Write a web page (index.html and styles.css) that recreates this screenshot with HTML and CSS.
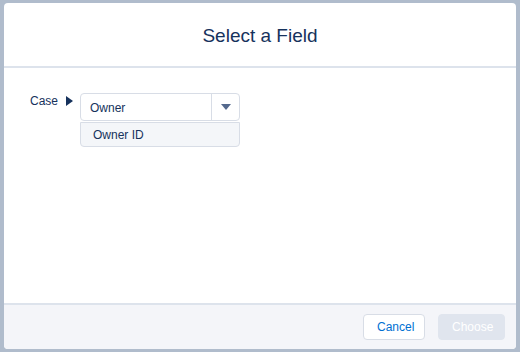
FILE: index.html
```html
<!DOCTYPE html>
<html lang="en">
<head>
  <meta charset="UTF-8">
  <title>Select a Field</title>
  <link rel="stylesheet" href="styles.css">
</head>
<body>
  <div class="modal">
    <header class="modal-header">
      <h2>Select a Field</h2>
    </header>

    <!-- Selector de campo -->
    <div class="modal-body">
      <div class="field-row">
        <span class="field-label">Case</span>
        <span class="arrow"></span>
        <div class="picker">
          <div class="select">
            <span class="select-value">Owner</span>
            <span class="select-btn"><span class="caret"></span></span>
          </div>
          <div class="option">Owner ID</div>
        </div>
      </div>
    </div>

    <footer class="modal-footer">
      <button class="btn btn-neutral">Cancel</button>
      <button class="btn btn-disabled" disabled>Choose</button>
    </footer>
  </div>
</body>
</html>
```

FILE: styles.css
```css
/* Estilos globales */
body {
  margin: 0;
  padding: 3px 4px 3px 4px;
  background-color: #b0bccc;
  font-family: 'Liberation Sans', Arial, sans-serif;
  color: #16325c;
  height: 352px;
  box-sizing: border-box;
}

.modal {
  background-color: #fff;
  border-radius: 4px;
  height: 346px;
  display: flex;
  flex-direction: column;
  overflow: hidden;
}

.modal-header {
  height: 63px;
  border-bottom: 2px solid #dde3ec;
  display: flex;
  align-items: center;
  justify-content: center;
}

.modal-header h2 {
  margin: 0;
  font-size: 19px;
  font-weight: normal;
  color: #16325c;
  padding-top: 3px;
}

.modal-body {
  flex: 1;
  padding: 25px 0 0 26px;
}

.field-row {
  display: flex;
  align-items: flex-start;
}

.field-label {
  font-size: 12px;
  margin-top: 1px;
}

.arrow {
  width: 0;
  height: 0;
  border-top: 5px solid transparent;
  border-bottom: 5px solid transparent;
  border-left: 7px solid #16325c;
  margin: 3px 0 0 8px;
}

.picker {
  margin-left: 7px;
  width: 160px;
}

.select {
  display: flex;
  height: 26px;
  border: 1px solid #d8dde6;
  border-radius: 4px;
  font-size: 12px;
  align-items: stretch;
}

.select-value {
  flex: 1;
  padding-left: 9px;
  display: flex;
  align-items: center;
  padding-top: 1px;
}

.select-btn {
  width: 27px;
  border-left: 1px solid #d8dde6;
  display: flex;
  align-items: center;
  justify-content: center;
}

.caret {
  width: 0;
  height: 0;
  border-left: 5px solid transparent;
  border-right: 5px solid transparent;
  border-top: 6px solid #54698d;
}

.option {
  margin-top: 1px;
  height: 23px;
  background-color: #f4f6f9;
  border: 1px solid #d8dde6;
  border-radius: 0 0 4px 4px;
  font-size: 12px;
  padding-left: 12px;
  display: flex;
  align-items: center;
}

/* Pie */
.modal-footer {
  height: 44px;
  background-color: #f4f5f9;
  border-top: 2px solid #dde3ec;
  display: flex;
  justify-content: flex-end;
  align-items: center;
  padding-right: 11px;
  gap: 13px;
}

.btn {
  height: 26px;
  border-radius: 4px;
  font-family: 'Liberation Sans', Arial, sans-serif;
  font-size: 12px;
  padding: 0 13px;
}

.btn-neutral {
  background-color: #fff;
  border: 1px solid #d8dde6;
  color: #0070d2;
  width: 62px;
}

.btn-disabled {
  background-color: #e0e5ee;
  border: 1px solid #e0e5ee;
  color: #fff;
  width: 67px;
}
```
